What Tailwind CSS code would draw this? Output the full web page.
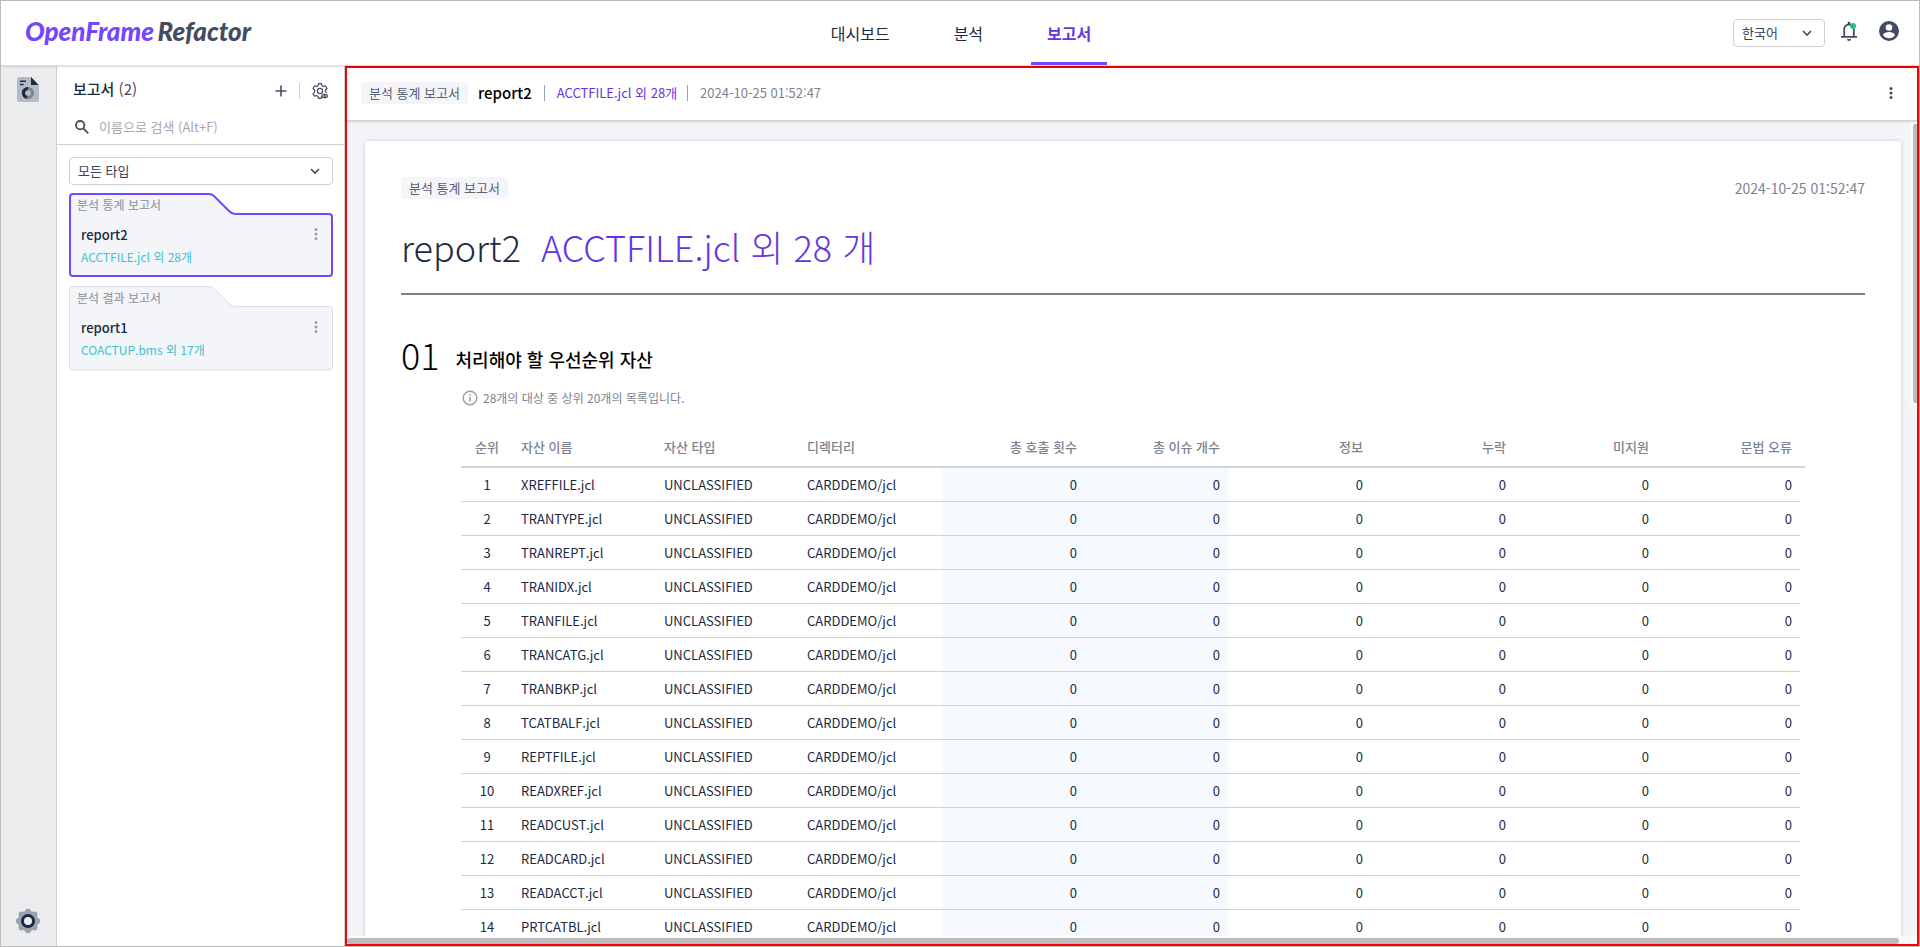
<!DOCTYPE html>
<html lang="ko">
<head>
    <meta charset="UTF-8">
    <meta name="viewport" content="width=device-width, initial-scale=1.0">
    <title>보고서 - OpenFrame Refactor</title>
    <!-- Tailwind CSS -->
    <script src="https://cdn.jsdelivr.net/npm/@tailwindcss/browser@4"></script>
    <style>
        body {
            font-family: 'Noto Sans CJK KR', 'Noto Sans', sans-serif;
        }
    </style>
</head>
<body class="flex flex-col h-screen overflow-hidden border border-[#bbbbbb] bg-white text-[#1b2a42]">
    <!-- Header -->
    <header class="relative z-10 flex items-center shrink-0 h-[65px] border-b border-[#dcdde1] bg-white shadow-sm">
        <div class="flex-1 pl-6 pb-1">
            <a href="#" class="font-[Lato] text-[26px] leading-7 font-black italic text-[#7347ff]">OpenFrame <span class="-ml-0.5 text-[#434b60]">Refactor</span></a>
        </div>
        <nav class="flex gap-8 h-16">
            <a href="#" class="px-4 leading-16">대시보드</a>
            <a href="#" class="px-4 leading-16">분석</a>
            <a href="#" class="px-4 leading-16 font-bold text-[#6535e0] border-b-3 border-[#7347ff]">보고서</a>
        </nav>
        <div class="flex-1 flex items-center justify-end gap-4 pl-1 pr-[18px]">
            <div class="relative">
                <select aria-label="언어" class="appearance-none block w-[92px] h-7 pl-2 rounded border border-[#cfd1d7] bg-white text-[13px] text-[#374056]">
                    <option>한국어</option>
                </select>
                <svg class="absolute right-3 top-2 w-3 h-3 pointer-events-none" viewBox="0 0 12 12" fill="none" stroke="#434b60" stroke-width="1.6"><path d="M2 4l4 4 4-4"/></svg>
            </div>
            <button aria-label="알림" class="mb-1">
                <svg class="w-4 h-5" viewBox="0 0 16 20">
                    <path d="M3.2 15.5V8.3a4.8 4.8 0 0 1 9.6 0v7.2" fill="none" stroke="#434b60" stroke-width="1.8"/>
                    <path d="M8 .8v2.4" stroke="#434b60" stroke-width="2.4"/>
                    <path d="M0 15h16v1.8H0zM6 18h4a2 2 0 0 1-4 0z" fill="#434b60"/>
                    <circle cx="12" cy="5" r="3" fill="#26c281"/>
                </svg>
            </button>
            <button aria-label="사용자" class="ml-1 mb-1">
                <svg class="w-6 h-6" viewBox="0 0 24 24" fill="#434b60"><path d="M12 2a10 10 0 1 0 0 20 10 10 0 0 0 0-20zm0 3.2a3.3 3.3 0 1 1 0 6.6 3.3 3.3 0 0 1 0-6.6zm0 14a7.2 7.2 0 0 1-6-3.2c0-2 4-3.1 6-3.1s6 1.1 6 3.1a7.2 7.2 0 0 1-6 3.2z"/></svg>
            </button>
        </div>
    </header>

    <div class="flex flex-1 min-h-0">
        <!-- Icon rail -->
        <aside class="flex flex-col items-center justify-between shrink-0 w-14 pt-[11px] pb-3 pr-0.5 border-r border-[#cfd0d4] bg-[#ecedef]">
            <button aria-label="보고서">
                <svg class="w-[22px] h-[25px]" viewBox="0 0 22 25">
                    <path d="M2 0h12l8 8v15a2 2 0 0 1-2 2H2a2 2 0 0 1-2-2V2a2 2 0 0 1 2-2z" fill="#b6bac3"/>
                    <path d="M14 0l7.5 8H14z" fill="#1b2a42"/>
                    <path d="M3 4.2h6M3 7.5h3.5" stroke="#1b2a42" stroke-width="1.6"/>
                    <circle cx="11" cy="16" r="4.5" fill="none" stroke="#7c8494" stroke-width="3.2"/>
                    <path d="M11 11.5a4.5 4.5 0 0 0 -1 8.9" fill="none" stroke="#1b2a42" stroke-width="3.2"/>
                </svg>
            </button>
            <button aria-label="설정">
                <svg class="w-[26px] h-[26px]" viewBox="0 0 26 26">
                    <g fill="#9ba2ab">
                        <circle cx="13" cy="13" r="10.3"/>
                        <circle cx="13" cy="3.8" r="3"/><circle cx="13" cy="22.2" r="3"/><circle cx="3.8" cy="13" r="3"/><circle cx="22.2" cy="13" r="3"/>
                        <circle cx="6.5" cy="6.5" r="3"/><circle cx="19.5" cy="6.5" r="3"/><circle cx="6.5" cy="19.5" r="3"/><circle cx="19.5" cy="19.5" r="3"/>
                    </g>
                    <circle cx="13" cy="13" r="5.5" fill="#ecedef" stroke="#1b2a42" stroke-width="3"/>
                </svg>
            </button>
        </aside>

        <!-- Report list -->
        <section class="flex flex-col shrink-0 w-[288px] border-r border-[#cfd0d4]">
            <div class="flex items-center h-11 px-4 pt-0.5">
                <h1 class="flex-1 text-[15px] font-medium">보고서 <span class="font-normal text-[#434b60]">(2)</span></h1>
                <button aria-label="추가" class="mt-1">
                    <svg class="w-3 h-3" viewBox="0 0 12 12" stroke="#434b60" stroke-width="1.6"><path d="M6 .5v11M.5 6h11"/></svg>
                </button>
                <span class="w-px h-4 mt-1 mx-3 bg-[#cfd1d7]"></span>
                <button aria-label="보고서 설정" class="mt-1">
                    <svg class="w-4 h-4" viewBox="0 0 16 16" fill="none" stroke="#434b60" stroke-width="1.2" stroke-linejoin="round">
                        <path d="M9.5 13.5l-.4 1.8H6.5L6 13.2l-1.4-.7-2 .7L1 10.6l1.6-1.5V7L1 5.5l1.6-2.7 2 .7L6 2.8 6.5.7h3l.5 2.1 1.4.7 2-.7L15 5.5 13.4 7v1.6l1.4 1.3"/>
                        <circle cx="8" cy="8" r="2.6"/>
                        <ellipse cx="12.6" cy="13" rx="2.8" ry="1.7" fill="#fff"/>
                        <circle cx="12.6" cy="13" r=".5" fill="#434b60"/>
                    </svg>
                </button>
            </div>
            <label class="flex items-center gap-2.5 h-[34px] pl-[18px]">
                <svg class="w-[14px] h-[14px]" viewBox="0 0 14 14" fill="none" stroke="#434b60" stroke-width="1.8"><circle cx="5.2" cy="5.2" r="4.2"/><path d="M8.3 8.3l5 5"/></svg>
                <input type="text" aria-label="이름으로 검색" placeholder="이름으로 검색 (Alt+F)" class="flex-1 min-w-0 text-[13px] outline-none placeholder:text-[#a4a8b1]">
            </label>
            <div class="flex flex-col gap-2 pl-3 pr-[11px] pt-3 border-t border-[#cfd1d7]">
                <div class="relative">
                    <select aria-label="타입" class="appearance-none block w-full h-7 pl-2 rounded border border-[#cfd1d7] bg-white text-[13px] text-[#374056]">
                        <option>모든 타입</option>
                    </select>
                    <svg class="absolute right-3 top-2 w-3 h-3 pointer-events-none" viewBox="0 0 12 12" fill="none" stroke="#434b60" stroke-width="1.6"><path d="M2 4l4 4 4-4"/></svg>
                </div>

                <article class="relative h-[85px]">
                    <svg class="absolute inset-0 w-full h-full" viewBox="0 0 264 85"><path d="M4 1h136q3 0 5 2l15 15q3 3 6 3h94q3 0 3 3v56q0 3-3 3H4q-3 0-3-3V4q0-3 3-3z" fill="#f4f5f8" stroke="#7347ff" stroke-width="2"/></svg>
                    <div class="relative pl-2 text-xs leading-6 font-medium text-[#9a9fa9]">분석 통계 보고서</div>
                    <div class="relative flex items-start justify-between pl-3 pr-[13px] pt-2">
                        <div>
                            <h2 class="text-[13px] leading-5 font-medium text-[#1b2a42]">report2</h2>
                            <p class="pt-0.5 text-xs leading-5 text-[#3fc1d3]">ACCTFILE.jcl 외 28개</p>
                        </div>
                        <button aria-label="메뉴" class="pt-[3px] px-0.5">
                            <svg class="w-1 h-3" viewBox="0 0 4 12" fill="#9a9fa9"><circle cx="2" cy="1.5" r="1.5"/><circle cx="2" cy="6" r="1.5"/><circle cx="2" cy="10.5" r="1.5"/></svg>
                        </button>
                    </div>
                </article>

                <article class="relative h-[85px]">
                    <svg class="absolute inset-0 w-full h-full" viewBox="0 0 264 85"><path d="M4 .5h136q3 0 5 2l15 15q3 3 6 3h94q3.5 0 3.5 3.5v56.5q0 3.5-3.5 3.5H4q-3.5 0-3.5-3.5V4q0-3.5 3.5-3.5z" fill="#f4f5f8" stroke="#dcdde1"/></svg>
                    <div class="relative pl-2 text-xs leading-6 font-medium text-[#9a9fa9]">분석 결과 보고서</div>
                    <div class="relative flex items-start justify-between pl-3 pr-[13px] pt-2">
                        <div>
                            <h2 class="text-[13px] leading-5 font-medium text-[#1b2a42]">report1</h2>
                            <p class="pt-0.5 text-xs leading-5 text-[#3fc1d3]">COACTUP.bms 외 17개</p>
                        </div>
                        <button aria-label="메뉴" class="pt-[3px] px-0.5">
                            <svg class="w-1 h-3" viewBox="0 0 4 12" fill="#9a9fa9"><circle cx="2" cy="1.5" r="1.5"/><circle cx="2" cy="6" r="1.5"/><circle cx="2" cy="10.5" r="1.5"/></svg>
                        </button>
                    </div>
                </article>
            </div>
        </section>

        <!-- Report -->
        <main class="relative flex flex-col flex-1 min-w-0 border-2 border-[#ff0000] bg-[#f4f5f8]">
            <div class="relative z-10 flex items-center shrink-0 h-[53px] pl-[14px] pr-6 pb-0.5 border-b border-[#cfd1d7] bg-white shadow-sm">
                <span class="px-2 rounded bg-[#f4f5f8] text-[13px] leading-[22px] text-[#5a6172]">분석 통계 보고서</span>
                <h2 class="ml-2.5 text-[15px] leading-6 font-medium text-black">report2</h2>
                <span class="w-px h-4 mx-3 bg-[#9a9fa9]"></span>
                <span class="text-[13px] text-[#6535e0]">ACCTFILE.jcl 외 28개</span>
                <span class="w-px h-4 ml-2.5 mr-3 bg-[#9a9fa9]"></span>
                <time class="text-[13px] text-[#7d8290]">2024-10-25 01:52:47</time>
                <button aria-label="메뉴" class="ml-auto">
                    <svg class="w-1 h-3" viewBox="0 0 4 12" fill="#434b60"><circle cx="2" cy="1.5" r="1.5"/><circle cx="2" cy="6" r="1.5"/><circle cx="2" cy="10.5" r="1.5"/></svg>
                </button>
            </div>

            <div class="flex-1 min-h-0 overflow-hidden pl-[18px] pr-4 pt-5">
                <article class="px-9 pt-9 rounded bg-white shadow-[0_0_4px_rgba(0,0,0,0.18)]">
                    <div class="flex items-center justify-between">
                        <span class="px-2 rounded bg-[#f4f5f8] text-[13px] leading-[22px] text-[#5a6172]">분석 통계 보고서</span>
                        <time class="text-sm leading-[22px] text-[#7d8290]">2024-10-25 01:52:47</time>
                    </div>
                    <h2 class="flex gap-5 py-5 border-b-2 border-[#7a8290] text-4xl leading-[54px] font-light">
                        <span>report2</span>
                        <span class="text-[#6535e0]">ACCTFILE.jcl 외 28 개</span>
                    </h2>

                    <h3 class="flex items-end gap-4 pt-8 text-black">
                        <span class="text-4xl leading-[54px] font-light">01</span>
                        <span class="text-lg leading-11 font-medium">처리해야 할 우선순위 자산</span>
                    </h3>
                    <div class="px-[60px]">
                        <p class="flex items-center gap-[5px] pt-[5px] pl-px text-xs leading-6 text-[#7d8290]">
                            <svg class="w-4 h-4" viewBox="0 0 16 16"><circle cx="8" cy="8" r="6.8" fill="none" stroke="#9a9fa9" stroke-width="1.4"/><path d="M7.2 7h1.6v4.5H7.2zM7.2 4.2h1.6v1.6H7.2z" fill="#9a9fa9"/></svg>
                            28개의 대상 중 상위 20개의 목록입니다.
                        </p>
                        <table class="w-full mt-[18px] table-fixed border-separate border-spacing-0 text-[13px] leading-5">
                            <thead class="text-[#7d8290]">
                                <tr>
                                    <th class="w-[52px] h-10 border-b-2 border-[#d3d3da] font-medium text-center">순위</th>
                                    <th class="px-2 border-b-2 border-[#d3d3da] font-medium text-left">자산 이름</th>
                                    <th class="px-2 border-b-2 border-[#d3d3da] font-medium text-left">자산 타입</th>
                                    <th class="px-2 border-b-2 border-[#d3d3da] font-medium text-left">디렉터리</th>
                                    <th class="px-2 border-b-2 border-[#d3d3da] font-medium text-right">총 호출 횟수</th>
                                    <th class="px-2 border-b-2 border-[#d3d3da] font-medium text-right">총 이슈 개수</th>
                                    <th class="px-2 border-b-2 border-[#d3d3da] font-medium text-right">정보</th>
                                    <th class="px-2 border-b-2 border-[#d3d3da] font-medium text-right">누락</th>
                                    <th class="px-2 border-b-2 border-[#d3d3da] font-medium text-right">미지원</th>
                                    <th class="px-2 border-b-2 border-[#d3d3da] font-medium text-right">문법 오류</th>
                                    <th class="w-[5px] border-b-2 border-[#d3d3da]"></th>
                                </tr>
                            </thead>
                            <tbody id="assetRows"></tbody>
                        </table>
                    </div>
                </article>
            </div>

            <!-- Scrollbars -->
            <div class="absolute right-0 top-[54px] w-1.5 h-[283px] rounded-l border-2 border-r-0 border-white bg-[#bbbbbb]"></div>
            <div class="shrink-0 h-2 pt-0.5 pr-[18px] bg-[#fafafa]">
                <div class="h-1.5 rounded bg-[#bbbbbb]"></div>
            </div>
        </main>
    </div>

    <script>
        const assets = [
            'XREFFILE', 'TRANTYPE', 'TRANREPT', 'TRANIDX', 'TRANFILE', 'TRANCATG', 'TRANBKP',
            'TCATBALF', 'REPTFILE', 'READXREF', 'READCUST', 'READCARD', 'READACCT', 'PRTCATBL'
        ];

        document.getElementById('assetRows').innerHTML = assets.map((name, index) => `
            <tr>
                <td class="h-[34px] border-b border-[#cfd1d7] text-center">${index + 1}</td>
                <td class="px-2 border-b border-[#cfd1d7]">${name}.jcl</td>
                <td class="px-2 border-b border-[#cfd1d7]">UNCLASSIFIED</td>
                <td class="px-2 border-b border-[#cfd1d7]">CARDDEMO/jcl</td>
                <td class="px-2 border-b border-[#cfd1d7] bg-[#f6f9fe] text-right">0</td>
                <td class="px-2 border-b border-[#cfd1d7] bg-[#f6f9fe] text-right">0</td>
                <td class="px-2 border-b border-[#cfd1d7] text-right">0</td>
                <td class="px-2 border-b border-[#cfd1d7] text-right">0</td>
                <td class="px-2 border-b border-[#cfd1d7] text-right">0</td>
                <td class="px-2 border-b border-[#cfd1d7] text-right">0</td>
            </tr>
        `).join('');
    </script>
</body>
</html>
